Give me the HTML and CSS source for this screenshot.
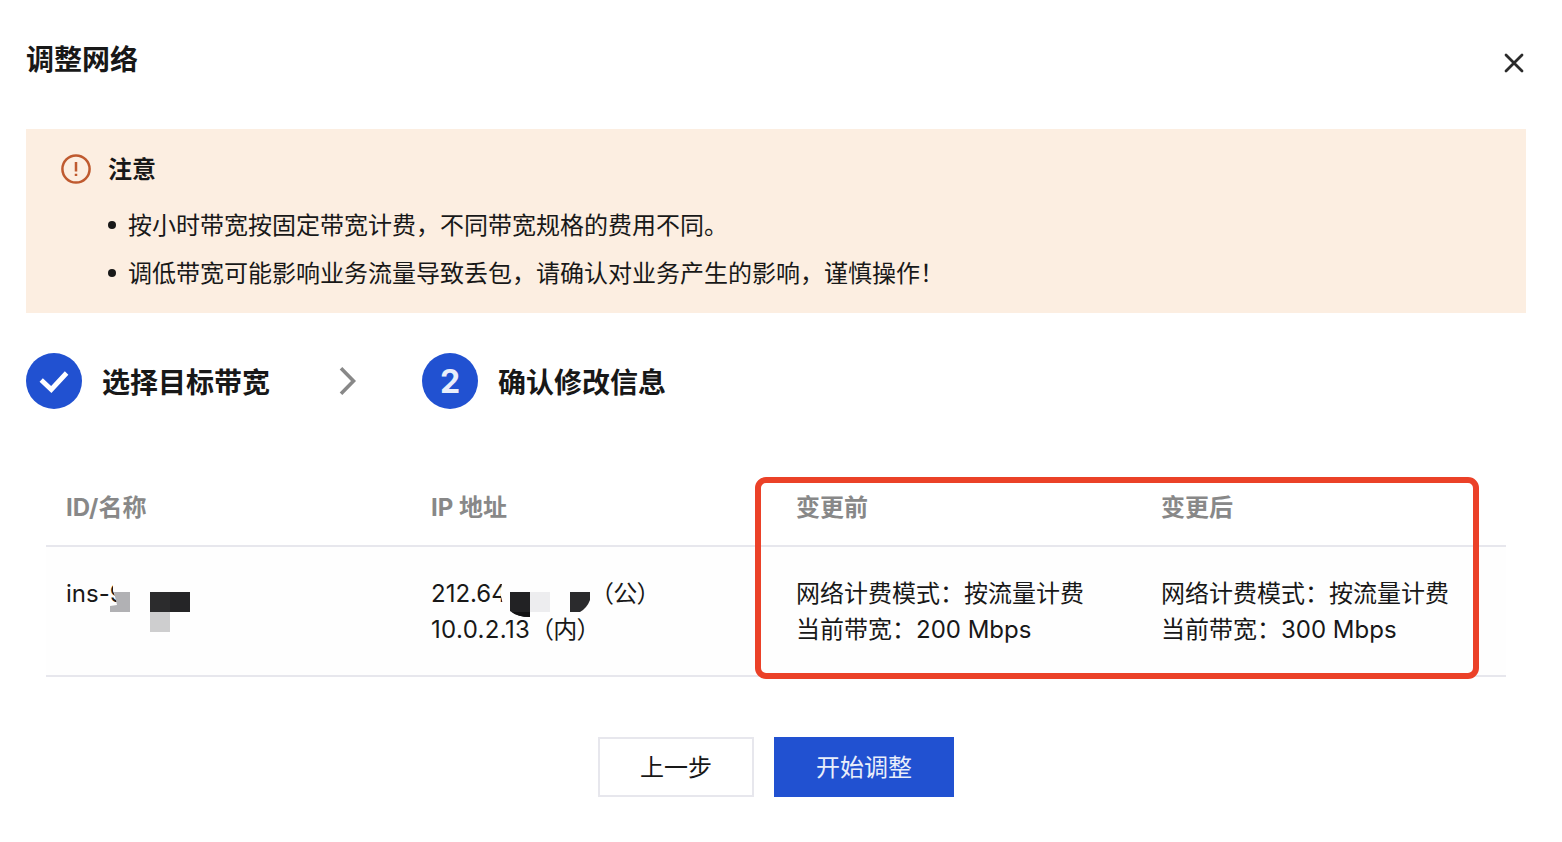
FILE: index.html
```html
<!DOCTYPE html>
<html lang="zh-CN">
<head>
<meta charset="utf-8">
<title>调整网络</title>
<link rel="stylesheet" href="styles.css">
</head>
<body>
<main class="dialog">
  <header class="dialog-head">
    <h1 class="title">调整网络</h1>
    <button class="close" aria-label="关闭">
      <svg width="20" height="20" viewBox="0 0 20 20"><path d="M2 2L18 18M18 2L2 18"/></svg>
    </button>
  </header>

  <section class="notice">
    <svg class="notice-icon" width="30" height="30" viewBox="0 0 30 30"><circle cx="15" cy="15" r="13.6"/><path d="M15 8V17.6M15 19.7V22"/></svg>
    <div class="notice-body">
      <h2 class="notice-title">注意</h2>
      <ul class="notice-list">
        <li>按小时带宽按固定带宽计费，不同带宽规格的费用不同。</li>
        <li>调低带宽可能影响业务流量导致丢包，请确认对业务产生的影响，谨慎操作！</li>
      </ul>
    </div>
  </section>

  <ol class="steps">
    <li class="step">
      <span class="badge"><svg width="56" height="56" viewBox="0 0 56 56"><path d="M15.2 27L25.3 36.5L40.6 20"/></svg></span>
      <span class="step-label">选择目标带宽</span>
    </li>
    <li class="arrow"><svg width="20" height="30" viewBox="0 0 20 30"><path d="M3 2.2L15.5 15L3 27.8"/></svg></li>
    <li class="step">
      <span class="badge number">2</span>
      <span class="step-label">确认修改信息</span>
    </li>
  </ol>

  <section class="table">
    <div class="row head">
      <div>ID/名称</div><div>IP 地址</div><div>变更前</div><div>变更后</div>
    </div>
    <div class="row data">
      <div class="cell">ins-9
        <svg class="mask mask-id" width="120" height="50" viewBox="0 0 120 50">
          <path fill="#fefefe" d="M13 0H120V50H0V26H20L13 9Z"/>
          <path fill="#b1b1b4" d="M14 10H30V30H10V24L17 23Z"/>
          <path fill="#2c2c2d" d="M50 10H70V30H50Z"/>
          <path fill="#252527" d="M70 10H90V30H70Z"/>
          <path fill="#cececf" d="M50 30H70V50H50Z"/>
        </svg>
      </div>
      <div class="cell">
        <p class="ip"><span class="ip-number public">212.64</span><span class="ip-kind">（公）</span></p>
        <p class="ip"><span class="ip-number">10.0.2.13</span><span class="ip-kind">（内）</span></p>
        <svg class="mask mask-ip" width="100" height="40" viewBox="0 0 100 40">
          <path fill="#fefefe" d="M3 0H94V32H35Q12 33 3 25L0 12Z"/>
          <path fill="#222224" d="M10 12H30V37Q17 37 10 31Z"/>
          <path fill="#121213" d="M12 32H30V37Q18 37 12 32Z"/>
          <path fill="#ededef" d="M30 12H50V32H30Z"/>
          <path fill="#2b2b2d" d="M70 12H90V20Q87 28 80 32H70Z"/>
        </svg>
      </div>
      <div class="cell"><p>网络计费模式：按流量计费</p><p>当前带宽：200 Mbps</p></div>
      <div class="cell"><p>网络计费模式：按流量计费</p><p>当前带宽：300 Mbps</p></div>
    </div>
    <div class="highlight"></div>
  </section>

  <footer class="actions">
    <button class="btn">上一步</button>
    <button class="btn primary">开始调整</button>
  </footer>
</main>
</body>
</html>
```

FILE: styles.css
```css
* { box-sizing: border-box; margin: 0; padding: 0; }
body {
  background: #fff;
  color: #181818;
  font: 24px/36px Inter, "Noto Sans CJK SC", sans-serif;
  text-spacing-trim: space-all;
}
svg { display: block; fill: none; }
button { font: inherit; color: inherit; }
ul, ol { list-style: none; }
.dialog { height: 842px; padding: 39px 36px 0 26px; overflow: hidden; }
.dialog-head { display: flex; justify-content: space-between; height: 90px; }
.title { font-size: 28px; line-height: 42px; font-weight: 700; }
.close { display: flex; width: 24px; height: 24px; margin-top: 12px; padding: 2px; background: none; border: 0; }
.close path { stroke: #2b2b2b; stroke-width: 2.8; stroke-linecap: round; }
.notice { display: flex; gap: 17px; height: 184px; padding: 23px 35px; background: #fceee1; }
.notice-icon { margin-top: 2px; stroke: #bf5a2f; stroke-width: 2.5; }
.notice-title { font-size: 24px; line-height: 36px; font-weight: 700; }
.notice-list { margin-top: 14px; }
.notice-list li { display: flex; align-items: center; gap: 12px; height: 48px; white-space: nowrap; }
.notice-list li::before { content: ""; width: 8px; height: 8px; margin-bottom: 2px; border-radius: 50%; background: #181818; }
.steps { display: flex; align-items: center; height: 56px; margin-top: 40px; }
.step { display: flex; align-items: center; gap: 20px; }
.badge { display: grid; place-items: center; width: 56px; height: 56px; border-radius: 50%; background: #2151d1; color: #e9eefa; font-size: 32px; font-weight: 700; }
.number { padding-top: 2px; }
.badge path { stroke: #fff; stroke-width: 4.8; }
.step-label { padding-top: 3px; font-size: 28px; line-height: 42px; font-weight: 700; }
.arrow { width: 152px; padding-left: 68px; }
.arrow path { stroke: #888; stroke-width: 3.6; }
.table { position: relative; margin: 60px 20px 0; }
.row { display: grid; grid-template-columns: repeat(4, 365px); border-bottom: 2px solid #e7e7ed; }
.row > div { padding-left: 20px; white-space: nowrap; }
.head { height: 78px; padding-top: 21px; color: #888; font-weight: 700; }
.data { height: 130px; background: #fefefe; }
.row > .cell { position: relative; padding-top: 29px; }
.ip { display: flex; }
.ip-number { width: 99px; letter-spacing: 0.35px; }
.ip-kind { letter-spacing: -0.8px; }
.public { width: 159px; letter-spacing: 0; }
.mask { position: absolute; }
.mask-id { left: 54px; top: 35px; }
.mask-ip { left: 89px; top: 33px; }
.highlight { position: absolute; left: 709px; top: 8px; width: 724px; height: 202px; border: 6px solid #eb4128; border-radius: 11px; }
.actions { display: flex; justify-content: center; gap: 20px; margin-top: 60px; }
.btn { width: 156px; height: 60px; padding-top: 2px; border: 2px solid #e7e7ed; background: #fff; }
.primary { width: 180px; border: 0; background: #2151d1; color: #e9eefa; }
```
